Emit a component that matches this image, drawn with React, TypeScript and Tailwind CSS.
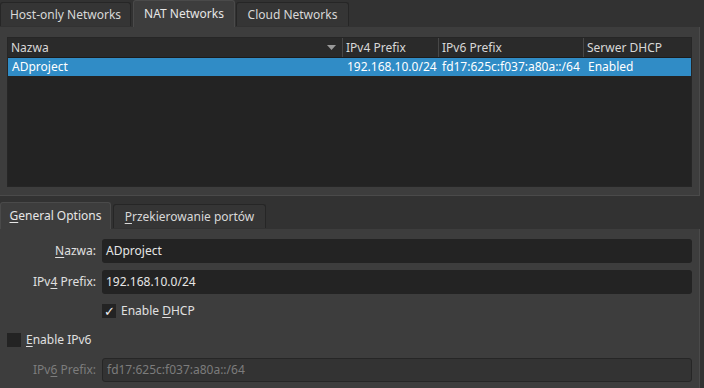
const FONT = { fontFamily: '"Noto Sans", "Open Sans", sans-serif' }

function Tab({ label, active, className = '' }: { label: React.ReactNode; active?: boolean; className?: string }) {
  return (
    <div
      className={
        'flex items-center justify-center rounded-t-[3px] border border-b-0 ' +
        (active
          ? 'h-[27px] self-end border-[#4a4a4a] bg-[#3d3d3d] text-[#e6e6e6]'
          : 'h-[24px] self-end mb-px border-[#262626] bg-[#353535] text-[#d8d8d8]') +
        ' ' +
        className
      }
    >
      {label}
    </div>
  )
}

function Field({ label, value, disabled }: { label: React.ReactNode; value: string; disabled?: boolean }) {
  return (
    <div className="flex items-center">
      <div className={'w-[89px] text-right ' + (disabled ? 'text-[#7c7c7c]' : 'text-[#e0e0e0]')}>{label}</div>
      <div
        className={
          'ml-[6px] flex h-[24px] flex-1 items-center rounded-[3px] px-[4px] ' +
          (disabled ? 'border border-[#262626] bg-[#333333] text-[#7c7c7c]' : 'bg-[#232323] text-[#e6e6e6]')
        }
      >
        {value}
      </div>
    </div>
  )
}

export default function App() {
  return (
    <div className="h-[388px] w-[704px] overflow-hidden bg-[#323232] text-[12px] text-[#e0e0e0]" style={FONT}>
      {/* Top tabs */}
      <div className="flex h-[27px] items-end">
        <Tab label="Host-only Networks" className="w-[131px]" />
        <Tab label="NAT Networks" active className="ml-[2px] w-[102px]" />
        <Tab label="Cloud Networks" className="ml-[1px] w-[113px]" />
      </div>

      {/* NAT panel */}
      <div className="mr-[4px] h-[169px] border-r border-b border-[#4a4a4a] bg-[#3d3d3d] px-[7px] pt-[10px] pb-[8px]">
        <div className="h-full border border-[#262626] bg-[#232323]">
          <div className="flex h-[20px] border-b border-[#1c1c1c] bg-[#2a2a2a] text-[#d8d8d8]">
            <div className="flex w-[335px] items-center justify-between border-r border-[#474747] pl-[3px] pr-[6px]">
              <span>Nazwa</span>
              <svg width="9" height="5" viewBox="0 0 9 5">
                <path d="M0 0h9L4.5 5z" fill="#9a9a9a" />
              </svg>
            </div>
            <div className="flex w-[96px] items-center border-r border-[#474747] pl-[3px]">IPv4 Prefix</div>
            <div className="flex w-[145px] items-center border-r border-[#474747] pl-[3px]">IPv6 Prefix</div>
            <div className="flex flex-1 items-center pl-[3px]">Serwer DHCP</div>
          </div>
          <div className="flex h-[18px] items-center bg-[#308cc6] text-white">
            <div className="w-[335px] pl-[4px]">ADproject</div>
            <div className="w-[96px] pl-[4px]">192.168.10.0/24</div>
            <div className="w-[145px] pl-[3px]">fd17:625c:f037:a80a::/64</div>
            <div className="flex-1 pl-[4px]">Enabled</div>
          </div>
        </div>
      </div>

      {/* Lower tabs */}
      <div className="mt-[6px] flex h-[27px] items-end">
        <Tab
          label={
            <span>
              <span className="underline underline-offset-2">G</span>eneral Options
            </span>
          }
          active
          className="w-[111px]"
        />
        <Tab
          label={
            <span>
              <span className="underline underline-offset-2">P</span>rzekierowanie portów
            </span>
          }
          className="ml-[2px] w-[153px]"
        />
      </div>

      {/* General options panel */}
      <div className="mr-[4px] h-[160px] border-r border-[#4a4a4a] bg-[#3d3d3d] px-[7px] pt-[10px]">
        <div className="flex flex-col">
          <Field
            label={
              <span>
                <span className="underline underline-offset-2">N</span>azwa:
              </span>
            }
            value="ADproject"
          />
          <div className="mt-[7px]">
            <Field
              label={
                <span>
                  IPv<span className="underline underline-offset-2">4</span> Prefix:
                </span>
              }
              value="192.168.10.0/24"
            />
          </div>
          <div className="mt-[10px] ml-[95px] flex h-[14px] items-center">
            <div className="flex h-[14px] w-[14px] items-center justify-center bg-[#232323] text-[13px] leading-none text-[#f0f0f0]">
              ✓
            </div>
            <span className="ml-[5px]">
              Enable <span className="underline underline-offset-2">D</span>HCP
            </span>
          </div>
          <div className="mt-[15px] flex h-[14px] items-center">
            <div className="h-[14px] w-[14px] bg-[#232323]" />
            <span className="ml-[5px]">
              <span className="underline underline-offset-2">E</span>nable IPv6
            </span>
          </div>
          <div className="mt-[11px]">
            <Field
              label={
                <span>
                  IPv<span className="underline underline-offset-2">6</span> Prefix:
                </span>
              }
              value="fd17:625c:f037:a80a::/64"
              disabled
            />
          </div>
        </div>
      </div>
    </div>
  )
}
